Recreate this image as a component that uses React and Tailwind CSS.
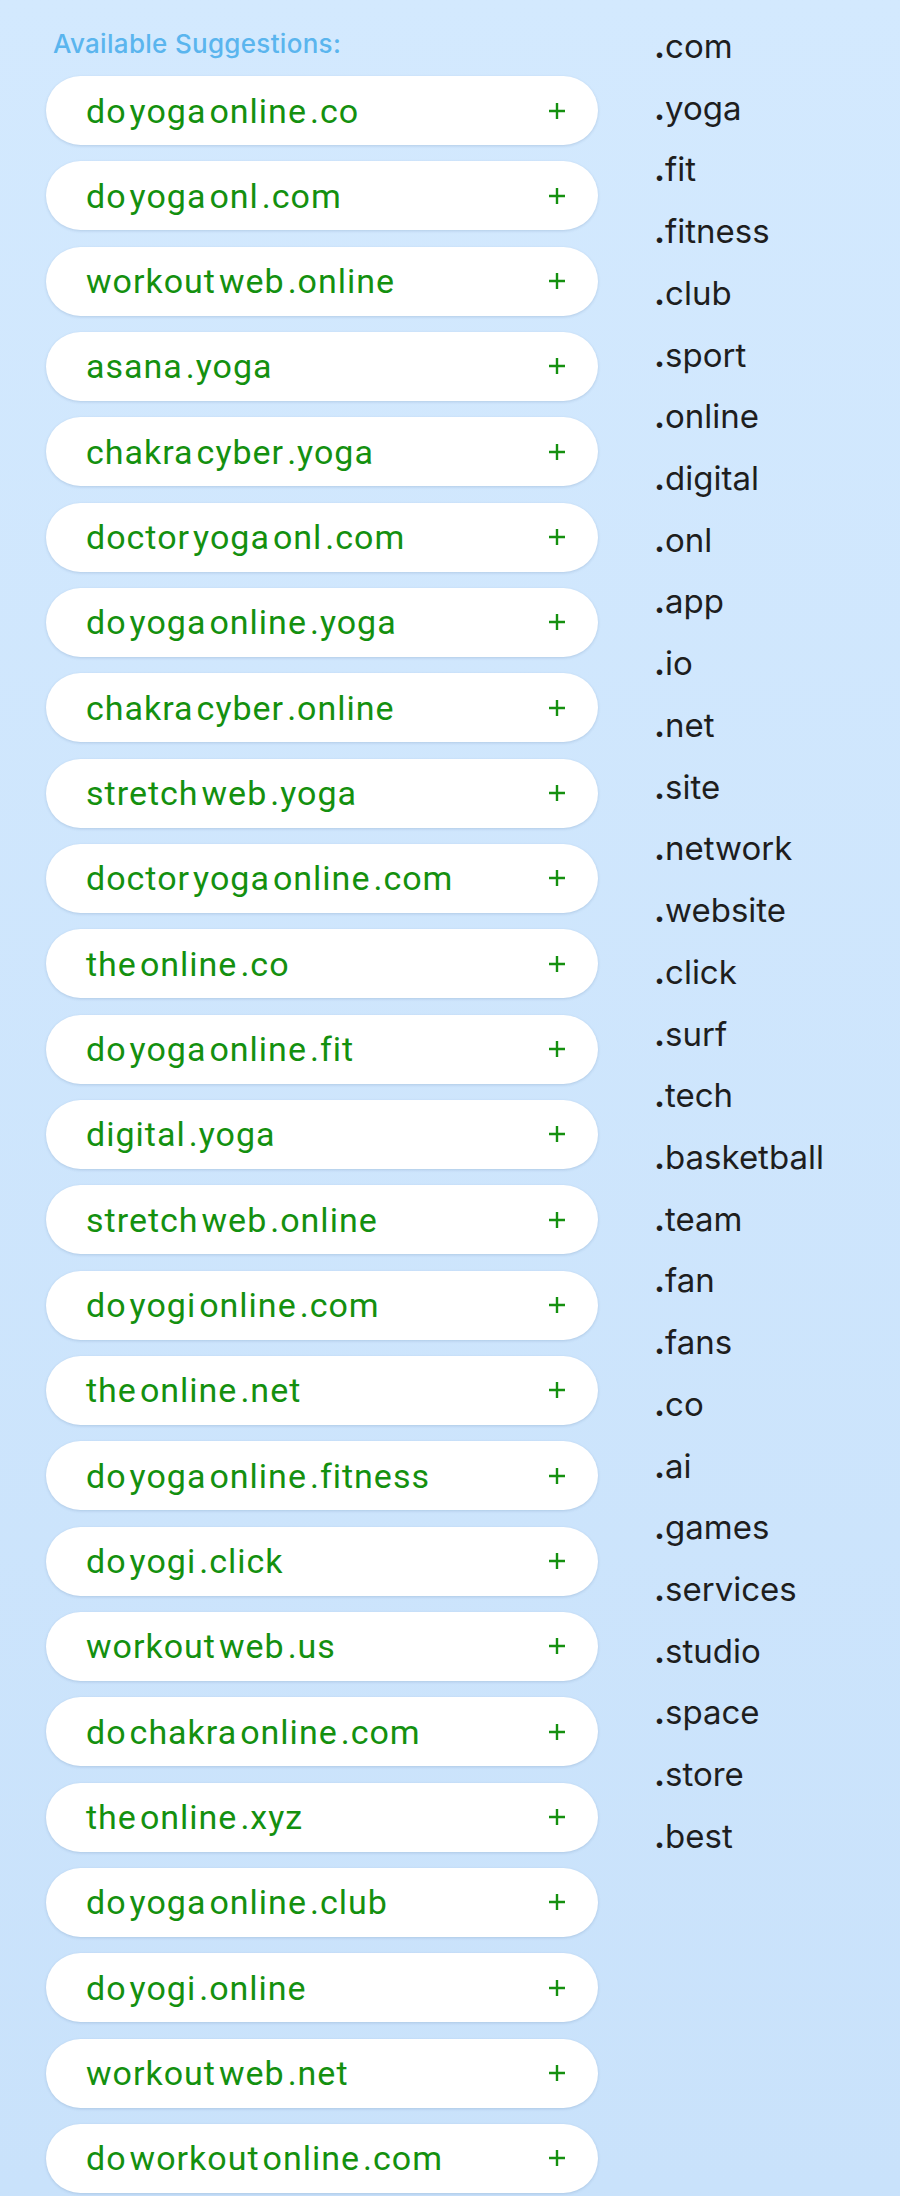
import React from "react";

const suggestions = [
  ["do", "yoga", "online", ".co"],
  ["do", "yoga", "onl", ".com"],
  ["workout", "web", ".online"],
  ["asana", ".yoga"],
  ["chakra", "cyber", ".yoga"],
  ["doctor", "yoga", "onl", ".com"],
  ["do", "yoga", "online", ".yoga"],
  ["chakra", "cyber", ".online"],
  ["stretch", "web", ".yoga"],
  ["doctor", "yoga", "online", ".com"],
  ["the", "online", ".co"],
  ["do", "yoga", "online", ".fit"],
  ["digital", ".yoga"],
  ["stretch", "web", ".online"],
  ["do", "yogi", "online", ".com"],
  ["the", "online", ".net"],
  ["do", "yoga", "online", ".fitness"],
  ["do", "yogi", ".click"],
  ["workout", "web", ".us"],
  ["do", "chakra", "online", ".com"],
  ["the", "online", ".xyz"],
  ["do", "yoga", "online", ".club"],
  ["do", "yogi", ".online"],
  ["workout", "web", ".net"],
  ["do", "workout", "online", ".com"],
];

const tlds = [
  "com", "yoga", "fit", "fitness", "club", "sport", "online", "digital", "onl", "app",
  "io", "net", "site", "network", "website", "click", "surf", "tech", "basketball", "team",
  "fan", "fans", "co", "ai", "games", "services", "studio", "space", "store", "best",
];

function SuggestionPill({ parts }) {
  return (
    <button
      type="button"
      className="flex h-[69px] w-full flex-none items-center justify-between rounded-full bg-white pl-10 pr-[32px] shadow-[0_1px_3px_rgba(40,80,130,0.18)]"
    >
      <span className="flex items-center gap-[3px] font-['Roboto',sans-serif] text-[34px] leading-none tracking-[1px] text-[#14900f]">
        {parts.map((part, i) => (
          <span key={i}>{part}</span>
        ))}
      </span>
      <svg width="18" height="18" viewBox="0 0 18 18" className="text-[#14900f]">
        <path d="M9 1v16M1 9h16" stroke="currentColor" strokeWidth="2.4" />
      </svg>
    </button>
  );
}

export default function App() {
  return (
    <div className="min-h-[2196px] w-[900px] overflow-hidden bg-gradient-to-b from-[#d3e9fe] to-[#c9e2fb]">
      <div className="flex">
        <div className="ml-[46px] w-[552px] flex-none">
          <p className="ml-[7px] pt-[29px] font-['Inter',sans-serif] text-[26px] font-medium leading-[30px] tracking-[0.3px] text-[#5ab5ee]">
            Available Suggestions:
          </p>
          <div className="mt-[17px] flex flex-col gap-[16.33px]">
            {suggestions.map((parts, i) => (
              <SuggestionPill key={i} parts={parts} />
            ))}
          </div>
        </div>
        <ul className="ml-[56px] pt-[16px] font-['Inter',sans-serif] text-[33px] leading-[61.72px] text-[#1e1e1e]">
          {tlds.map((t) => (
            <li key={t}>
              <span className="font-bold">.</span>
              {t}
            </li>
          ))}
        </ul>
      </div>
    </div>
  );
}
